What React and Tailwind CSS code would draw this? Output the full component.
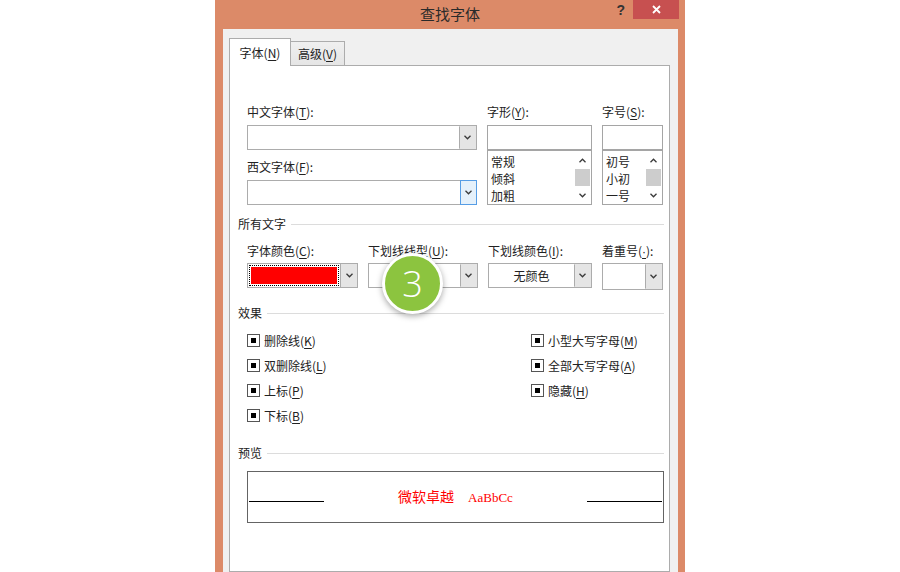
import React from 'react';

const Chevron = ({ up }) => (
  <svg width="7" height="5" viewBox="0 0 7 5">
    <path d={up ? 'M0.5 4.2L3.5 1.2L6.5 4.2' : 'M0.5 0.8L3.5 3.8L6.5 0.8'} fill="none" stroke="#3a3a3a" strokeWidth="1.3" />
  </svg>
);

// label with the mnemonic letter underlined
const Lbl = ({ text, k, className = '' }) => (
  <div className={`h-[16px] leading-[16px] text-[12px] text-[#222] whitespace-nowrap ${className}`}>
    {text}(<span className="underline underline-offset-2">{k}</span>):
  </div>
);

const Combo = ({ className = '', children, active, h = 'h-[25px]' }) => (
  <div className={`flex ${h} border border-[#acacac] bg-white ${className}`}>
    <div className="flex-1 flex items-center justify-center text-[12px] text-[#222]">{children}</div>
    <div
      className={`w-[17px] flex items-center justify-center border ${
        active ? 'bg-[#e5f1fb] border-[#569de5] -my-px -mr-px' : 'bg-[#e5e5e5] border-transparent border-l-[#acacac]'
      }`}
    >
      <Chevron />
    </div>
  </div>
);

const ListBox = ({ items }) => (
  <div className="flex h-[55px] border border-[#a5a5a5] bg-white">
    <div className="flex-1 pl-[3px] pt-[2px] text-[12px] leading-[17px] text-[#222]">
      {items.map((it) => (
        <div key={it}>{it}</div>
      ))}
    </div>
    <div className="w-[17px] flex flex-col items-center">
      <div className="h-[18px] flex items-center justify-center"><Chevron up /></div>
      <div className="w-[15px] h-[17px] bg-[#cdcdcd]" />
      <div className="flex-1 flex items-center justify-center"><Chevron /></div>
    </div>
  </div>
);

const Section = ({ title, className = '' }) => (
  <div className={`flex items-center h-[16px] ${className}`}>
    <span className="text-[12px] leading-[16px] text-[#222]">{title}</span>
    <div className="flex-1 h-px bg-[#dcdcdc] ml-[5px]" />
  </div>
);

const Check = ({ text, k }) => (
  <div className="h-[25px] flex items-center">
    <div className="w-[13px] h-[13px] border border-[#555] bg-white flex items-center justify-center">
      <div className="w-[5px] h-[5px] bg-black" />
    </div>
    <span className="ml-[4px] text-[12px] leading-[16px] text-[#222] whitespace-nowrap">
      {text}(<span className="underline underline-offset-2">{k}</span>)
    </span>
  </div>
);

export default function App() {
  return (
    <div className="w-[900px] h-[572px] bg-white flex justify-center overflow-hidden font-['Noto_Sans_CJK_SC','Liberation_Sans',sans-serif]">
      <div className="w-[470px] h-[572px] bg-[#dc8a68] flex flex-col">
        {/* title bar */}
        <div className="relative h-[29px] flex items-start justify-end shrink-0">
          <div className="absolute inset-x-0 top-[4px] text-center text-[15px] leading-[20px] text-[#2a2a2a]">查找字体</div>
          <div className="mt-[2px] mr-[8px] text-[14px] font-bold leading-[16px] text-[#333] font-['Liberation_Sans',sans-serif]">?</div>
          <div className="w-[46px] h-[19px] mr-[6px] bg-[#c75050] flex items-center justify-center">
            <svg width="9" height="9" viewBox="0 0 9 9">
              <path d="M1 1L8 8M8 1L1 8" stroke="white" strokeWidth="1.8" />
            </svg>
          </div>
        </div>

        {/* client area */}
        <div className="flex-1 ml-[8px] mr-[7px] bg-[#f0f0f0] pt-[9px] pl-[6px] pr-[8px] flex flex-col">
          {/* tabs */}
          <div className="flex items-end text-[12px] text-[#222]">
            <div className="relative z-10 -mb-px w-[62px] h-[28px] bg-white border border-b-0 border-[#acacac] flex items-center justify-center">
              字体(<span className="underline underline-offset-2">N</span>)
            </div>
            <div className="w-[54px] h-[24px] bg-gradient-to-b from-[#f0f0f0] to-[#e5e5e5] border border-l-0 border-b-0 border-[#acacac] flex items-center justify-center">
              高级(<span className="underline underline-offset-2">V</span>)
            </div>
          </div>

          {/* tab pane */}
          <div className="relative flex-1 bg-white border border-[#acacac] pl-[8px] pr-[5px] pt-[38px]">
            <div className="ml-[9px] grid grid-cols-[230px_105px_61px] gap-x-[10px]">
              <div className="flex flex-col">
                <Lbl text="中文字体" k="T" />
                <Combo className="mt-[5px]" />
                <Lbl text="西文字体" k="F" className="mt-[9px]" />
                <Combo className="mt-[5px]" active />
              </div>
              <div className="flex flex-col">
                <Lbl text="字形" k="Y" />
                <div className="mt-[5px] h-[25px] border border-[#a5a5a5] bg-white" />
                <ListBox items={['常规', '倾斜', '加粗']} />
              </div>
              <div className="flex flex-col">
                <Lbl text="字号" k="S" />
                <div className="mt-[5px] h-[25px] border border-[#a5a5a5] bg-white" />
                <ListBox items={['初号', '小初', '一号']} />
              </div>
            </div>

            <Section title="所有文字" className="mt-[11px]" />
            <div className="ml-[9px] mt-[11px] grid grid-cols-[111px_110px_104px_61px] gap-x-[10px]">
              <div className="flex flex-col">
                <Lbl text="字体颜色" k="C" />
                <div className="mt-[4px] flex h-[25px] border border-[#acacac] bg-white">
                  <div className="flex-1 m-px border border-dotted border-black p-px">
                    <div className="h-full bg-[#ff0000]" />
                  </div>
                  <div className="w-[17px] flex items-center justify-center bg-[#e5e5e5] border-l border-[#acacac]">
                    <Chevron />
                  </div>
                </div>
              </div>
              <div className="flex flex-col">
                <Lbl text="下划线线型" k="U" />
                <Combo className="mt-[4px]" />
              </div>
              <div className="flex flex-col">
                <Lbl text="下划线颜色" k="I" />
                <Combo className="mt-[4px]">无颜色</Combo>
              </div>
              <div className="flex flex-col">
                <div className="h-[16px] leading-[16px] text-[12px] text-[#222] whitespace-nowrap">
                  着重号(<span className="underline underline-offset-2 font-['Liberation_Sans',sans-serif]">·</span>):
                </div>
                <Combo className="mt-[4px]" h="h-[27px]" />
              </div>
            </div>

            <Section title="效果" className="mt-[15px]" />
            <div className="ml-[9px] mt-[7px] grid grid-cols-[284px_1fr]">
              <div className="flex flex-col">
                <Check text="删除线" k="K" />
                <Check text="双删除线" k="L" />
                <Check text="上标" k="P" />
                <Check text="下标" k="B" />
              </div>
              <div className="flex flex-col">
                <Check text="小型大写字母" k="M" />
                <Check text="全部大写字母" k="A" />
                <Check text="隐藏" k="H" />
              </div>
            </div>

            <Section title="预览" className="mt-[17px]" />
            <div className="ml-[9px] mt-[10px] h-[52px] border border-[#646464] flex items-start justify-between px-px">
              <div className="w-[75px] h-px bg-black mt-[29px]" />
              <div className="mt-[15px] flex items-baseline text-[#ff0000]">
                <span className="text-[14px] leading-[18px] font-normal">微软卓越</span>
                <span className="ml-[14px] text-[13px] leading-[18px] font-['Liberation_Serif',serif]">AaBbCc</span>
              </div>
              <div className="w-[75px] h-px bg-black mt-[29px]" />
            </div>

            {/* step marker */}
            <div className="absolute left-[152px] top-[187px] w-[61px] h-[61px] rounded-full bg-[#8cc43f] border-[3px] border-white shadow-[0_2px_6px_rgba(0,0,0,0.35)] flex items-center justify-center">
              <span className="text-white text-[36px] font-light leading-none font-['Open_Sans',sans-serif]">3</span>
            </div>
          </div>
        </div>
      </div>
    </div>
  );
}
